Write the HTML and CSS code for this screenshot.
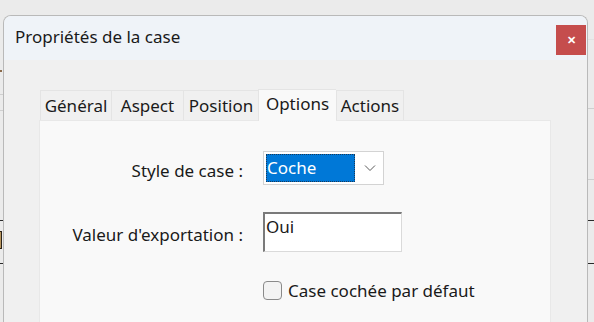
FILE: index.html
```html
<!DOCTYPE html>
<html>
<head>
    <title>Propriétés de la case</title>
    <link rel="stylesheet" href="styles.css">
</head>
<body>
    <div class="desk">
        <div class="edge edge-left">
            <div class="mark m1"></div>
            <div class="mark m2"></div>
            <div class="mark m3"></div>
            <div class="mark dark m4"></div>
            <div class="bracket"></div>
            <div class="mark dark m5"></div>
        </div>

        <div class="dialog">
            <div class="titlebar">
                <span class="title">Propriétés de la case</span>
                <button class="close" type="button">&#x2715;</button>
            </div>

            <div class="body">
                <div class="tabs">
                    <span class="tab t-general">Général</span>
                    <span class="tab t-aspect">Aspect</span>
                    <span class="tab t-position">Position</span>
                    <span class="tab t-options active">Options</span>
                    <span class="tab t-actions">Actions</span>
                </div>

                <div class="panel">
                    <div class="form">
                        <label class="lbl">Style de case :</label>
                        <div class="select">
                            <span class="select-value">Coche</span>
                            <svg class="chevron" width="12" height="8" viewBox="0 0 12 8">
                                <path d="M1 1.5 L6 6.5 L11 1.5" fill="none" stroke="#5a5a5a" stroke-width="1"/>
                            </svg>
                        </div>

                        <label class="lbl">Valeur d'exportation :</label>
                        <div class="textbox">Oui</div>

                        <span></span>
                        <div class="check-row">
                            <span class="checkbox"></span>
                            <span class="check-label">Case cochée par défaut</span>
                        </div>
                    </div>
                </div>
            </div>
        </div>

        <div class="edge edge-right">
            <div class="mark r1"></div>
            <div class="mark r2"></div>
            <div class="mark r3"></div>
            <div class="mark dark r4"></div>
            <div class="mark dark r5"></div>
        </div>
    </div>
</body>
</html>
```

FILE: styles.css
```css
html, body { margin: 0; height: 100%; overflow: hidden; }
body { background: #ebebeb; font-family: "Noto Sans", "Open Sans", sans-serif; font-size: 16px; color: #1a1a1a; }

.desk { display: flex; height: 322px; padding-top: 15px; box-sizing: border-box; }

/* bits of the document behind the dialog */
.edge { flex: none; position: relative; margin-top: -15px; }
.edge-left { width: 3px; }
.edge-right { width: 6px; }
.mark { position: absolute; left: 0; right: 0; height: 1px; background: #cfcfcf; }
.mark.dark { background: #2a2a2a; }
.m1 { top: 70px; height: 2px; background: #8b6a4a; width: 2px; }
.m2 { top: 94px; }
.m3 { top: 110px; }
.m4 { top: 220px; }
.m5 { top: 263px; }
.bracket { position: absolute; top: 231px; left: 0; width: 1px; height: 16px; border: 1px solid #2a2218; border-left: none; background: #b8955e; }
.r1 { top: 39px; background: #e2e2e2; }
.r2 { top: 108px; }
.r3 { top: 179px; }
.r4 { top: 220px; }
.r5 { top: 263px; }

.dialog {
    flex: 1;
    display: flex;
    flex-direction: column;
    background: #f0f0f0;
    border: 1px solid #b9b9b9;
    border-bottom: none;
    border-radius: 8px 8px 0 0;
    overflow: hidden;
}

.titlebar {
    display: flex;
    justify-content: space-between;
    align-items: flex-start;
    height: 44px;
    background: #eff3f8;
    padding-left: 11px;
}
.title { font-size: 17px; margin-top: 9px; }
.close {
    width: 30px;
    height: 30px;
    margin-top: 9px;
    margin-right: 1px;
    border: none;
    background: #c54d4d;
    color: #fff;
    font-size: 11px;
    font-weight: bold;
    padding: 0;
}

.body { padding: 28px 36px 0 35px; flex: 1; display: flex; flex-direction: column; }

.tabs { display: flex; align-items: flex-end; padding-left: 1px; height: 32px; }
.tab {
    height: 30px;
    box-sizing: border-box;
    padding-top: 3px;
    text-align: center;
    border: 1px solid #e4e4e4;
    border-bottom: none;
    border-right: none;
    background: #f0f0f0;
    font-size: 17px;
    line-height: 24px;
}
.t-general { width: 71px; }
.t-aspect { width: 72px; }
.t-position { width: 75px; }
.t-options { width: 78px; }
.t-actions { width: 68px; border-right: 1px solid #e4e4e4; }
.tab.active { height: 32px; background: #f9f9f9; padding-top: 2px; margin-bottom: -1px; position: relative; }

.panel {
    flex: 1;
    background: #f9f9f9;
    border: 1px solid #e8e8e8;
    border-bottom: none;
}

.form {
    display: grid;
    grid-template-columns: 203px auto;
    column-gap: 20px;
    row-gap: 27px;
    align-items: center;
    justify-items: start;
    padding-top: 30px;
    font-size: 17px;
}
.lbl { justify-self: end; padding-top: 5px; }

.select {
    width: 121px;
    height: 34px;
    box-sizing: border-box;
    border: 1px solid #d3d3d3;
    background: #fff;
    display: flex;
    align-items: center;
    padding: 1px 0 1px 2px;
}
.select-value {
    width: 89px;
    height: 28px;
    box-sizing: border-box;
    background: #0078d7;
    color: #fff;
    outline: 1px dotted #1a3a5a;
    outline-offset: -1px;
    padding-left: 1px;
    line-height: 27px;
}
.chevron { margin-left: 9px; }

.textbox {
    width: 139px;
    height: 40px;
    box-sizing: border-box;
    background: #fff;
    border: 1px solid #dadada;
    border-top: 2px solid #7a7a7a;
    border-left: 2px solid #7a7a7a;
    padding: 1px 0 0 1px;
    line-height: 24px;
}

.check-row { display: flex; align-items: center; gap: 6px; }
.checkbox {
    width: 19px;
    height: 19px;
    box-sizing: border-box;
    border: 1px solid #8a8a8a;
    border-radius: 4px;
    background: #f3f3f3;
}
```
